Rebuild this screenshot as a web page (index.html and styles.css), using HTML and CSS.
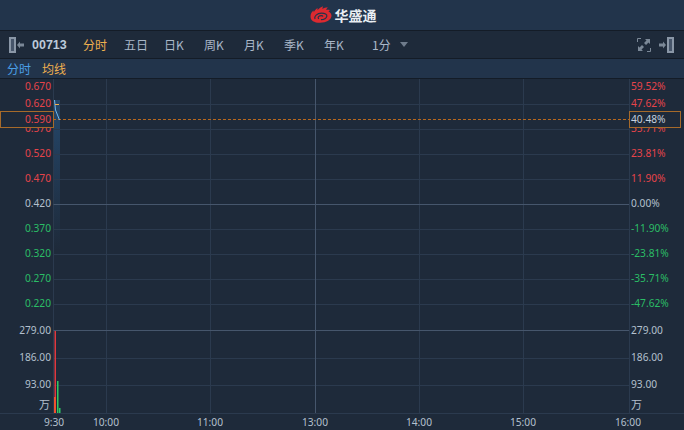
FILE: index.html
```html
<!DOCTYPE html>
<html lang="zh">
<head>
<meta charset="utf-8">
<title>华盛通 00713</title>
<link rel="stylesheet" href="styles.css">
</head>
<body>
<div class="app">
  <header class="brand">
    <svg class="logo" width="22" height="17" viewBox="0 0 22 17">
      <path class="flame" d="M0.500 10.500 C0.500 7.500 2 5.500 3.500 4.500 L3.800 6.200 C4.800 4.300 6.200 2.800 7.500 2 L7.500 4 C9 2.400 11 1 13 0.200 L12.300 3 C14 2 15.800 1.500 17.800 1.300 L16 3.800 C17.500 3.600 18.800 3.700 20 4 L18.500 5.500 C20.300 6.500 21.500 8 21.500 9.800 C21.500 13.500 16.500 16.800 10 16.800 C4 16.800 0.500 14.500 0.500 10.500 Z"/>
      <path class="swirl" d="M5 13 C3.800 10.300 7 7.200 11.500 7.200 C15 7.200 17.300 8.500 16.800 10.300 C16.300 12.200 13.800 13.500 11 13.700 M13 10.400 C12.500 9.400 10 9.400 8.800 10.400 C7.800 11.300 8 12.400 9 12.700"/>
    </svg>
    <span class="brand-name">华盛通</span>
  </header>
  <nav class="toolbar">
    <svg class="tool-icon" width="15" height="16" viewBox="0 0 15 16">
      <rect class="icon-box" x="1" y="1" width="5" height="14"/>
      <path class="icon-fill" d="M8 8 L11 4.500 V6.500 H15 V9.500 H11 V11.500 Z"/>
    </svg>
    <strong class="code">00713</strong>
    <span class="tab tab-first active">分时</span>
    <span class="tab">五日</span>
    <span class="tab">日K</span>
    <span class="tab">周K</span>
    <span class="tab">月K</span>
    <span class="tab">季K</span>
    <span class="tab">年K</span>
    <span class="period">1分</span>
    <span class="caret"></span>
    <span class="spacer"></span>
    <svg class="tool-icon" width="14" height="14" viewBox="0 0 14 14">
      <path class="icon-fill" d="M8 1 H13 V6 L11.500 4.500 L9 7 L7 5 L9.500 2.500 Z M6 13 H1 V8 L2.500 9.500 L5 7 L7 9 L4.500 11.500 Z"/>
      <path class="icon-line" d="M0.500 4 V0.500 H4 M13.500 10 V13.500 H10"/>
    </svg>
    <svg class="tool-icon icon-right" width="15" height="16" viewBox="0 0 15 16">
      <path class="icon-fill" d="M7 8 L4 4.500 V6.500 H0 V9.500 H4 V11.500 Z"/>
      <rect class="icon-box" x="9" y="1" width="5" height="14"/>
    </svg>
  </nav>
  <div class="legend">
    <span class="legend-price">分时</span>
    <span class="legend-avg">均线</span>
  </div>
  <svg class="chart" width="684" height="351" viewBox="0 79 684 351">
    <defs>
      <linearGradient id="area" x1="0" y1="0" x2="0" y2="1">
        <stop offset="0" stop-color="#2a5f92" stop-opacity=".55"/>
        <stop offset="1" stop-color="#2a5f92" stop-opacity="0"/>
      </linearGradient>
    </defs>
    <rect class="area" x="53" y="100" width="7" height="150"/>
    <g class="grid">
      <path d="M53.500 104.500 H629 M53.500 129.500 H629 M53.500 154.500 H629 M53.500 179.500 H629 M53.500 229.500 H629 M53.500 254.500 H629 M53.500 279.500 H629 M53.500 304.500 H629 M53.500 358.500 H629 M53.500 385.500 H629"/>
      <path d="M53.500 79 V413 M106.500 79 V413 M210.500 79 V413 M419.500 79 V413 M523.500 79 V413 M629.500 79 V413"/>
      <path d="M0 413.500 H684"/>
    </g>
    <g class="grid-major">
      <path d="M53.500 204.500 H629 M53.500 330.500 H629 M315.500 79 V413"/>
    </g>
    <path class="dash" d="M53 119.500 H629"/>
    <path class="line-price" d="M54.500 100 L55.500 110 L57.500 115 L59.500 120"/>
    <path class="line-avg" d="M55 104.500 H59"/>
    <g class="axis-left red">
      <text x="51" y="90">0.670</text>
      <text x="51" y="107">0.620</text>
      <text x="51" y="132">0.570</text>
      <text x="51" y="157">0.520</text>
      <text x="51" y="182">0.470</text>
    </g>
    <g class="axis-left flat"><text x="51" y="207">0.420</text></g>
    <g class="axis-left green">
      <text x="51" y="232">0.370</text>
      <text x="51" y="257">0.320</text>
      <text x="51" y="282">0.270</text>
      <text x="51" y="307">0.220</text>
    </g>
    <g class="axis-right red">
      <text x="631" y="90">59.52%</text>
      <text x="631" y="107">47.62%</text>
      <text x="631" y="132">35.71%</text>
      <text x="631" y="157">23.81%</text>
      <text x="631" y="182">11.90%</text>
    </g>
    <g class="axis-right flat"><text x="631" y="207">0.00%</text></g>
    <g class="axis-right green">
      <text x="631" y="232">-11.90%</text>
      <text x="631" y="257">-23.81%</text>
      <text x="631" y="282">-35.71%</text>
      <text x="631" y="307">-47.62%</text>
    </g>
    <g class="axis-left flat">
      <text x="51" y="334">279.00</text>
      <text x="51" y="361">186.00</text>
      <text x="51" y="388">93.00</text>
      <text class="unit" x="50" y="409">万</text>
    </g>
    <g class="axis-right flat">
      <text x="631" y="334">279.00</text>
      <text x="631" y="361">186.00</text>
      <text x="631" y="388">93.00</text>
      <text class="unit" x="631" y="409">万</text>
    </g>
    <g class="axis-time">
      <text x="54" y="426">9:30</text>
      <text x="106" y="426">10:00</text>
      <text x="210" y="426">11:00</text>
      <text x="315" y="426">13:00</text>
      <text x="419" y="426">14:00</text>
      <text x="523" y="426">15:00</text>
      <text x="628" y="426">16:00</text>
    </g>
    <rect class="bar-red" x="54.500" y="331" width="1.500" height="82"/>
    <rect class="bar-orange" x="54" y="397" width="2" height="16"/>
    <rect class="bar-green" x="57" y="381" width="1.500" height="32"/>
    <rect class="bar-green" x="59" y="408" width="1.500" height="5"/>
    <rect class="tag" x="0.500" y="111.500" width="53" height="16"/>
    <text class="tag-left" x="51" y="123">0.590</text>
    <rect class="tag" x="629.500" y="111.500" width="51" height="16"/>
    <text class="tag-right" x="631" y="123">40.48%</text>
  </svg>
</div>
</body>
</html>
```

FILE: styles.css
```css
* { box-sizing: border-box; }
html, body { margin: 0; padding: 0; }
body {
  width: 684px;
  height: 430px;
  overflow: hidden;
  background: #1e2a3a;
  font-family: "Noto Sans CJK SC", "Noto Sans", sans-serif;
}
.app { display: flex; flex-direction: column; width: 684px; height: 430px; }

.brand {
  display: flex;
  align-items: center;
  justify-content: center;
  gap: 3px;
  height: 31px;
  padding: 0 0 1px 2px;
  background: #22344b;
  border-bottom: 1px solid #141c27;
}
.flame { fill: #dc2a30; }
.swirl { fill: none; stroke: #22344b; stroke-width: 1.2; }
.brand-name { color: #e8edf2; font-size: 14px; font-weight: 700; line-height: 18px; }

.toolbar {
  display: flex;
  align-items: center;
  height: 28px;
  padding-left: 9px;
  background: #1e2a3a;
  border-bottom: 1px solid #141c27;
}
.tool-icon { flex: none; }
.icon-box { fill: #46556a; stroke: #8a97a7; stroke-width: 2; }
.icon-fill { fill: #7b8897; }
.icon-line { fill: none; stroke: #7b8897; }
.icon-right { margin: 0 10px 0 8px; }
.code {
  width: 51px;
  margin-left: 8px;
  color: #bccadb;
  font: 700 12.5px "Liberation Sans", sans-serif;
}
.tab { width: 40px; color: #aab8c9; font-size: 12px; line-height: 16px; }
.tab-first { width: 41px; }
.tab.active { color: #f0b04f; }
.period { width: 28px; margin-left: 8px; color: #aab8c9; font-size: 12px; line-height: 16px; }
.caret {
  width: 0;
  height: 0;
  border-left: 4px solid transparent;
  border-right: 4px solid transparent;
  border-top: 5px solid #6f7c8c;
}
.spacer { flex: 1; }

.legend {
  display: flex;
  align-items: center;
  gap: 11px;
  height: 20px;
  padding-left: 7px;
  background: #22344b;
  border-bottom: 1px solid #141c27;
  font-size: 12px;
  line-height: 16px;
}
.legend-price { color: #4a9fe6; }
.legend-avg { color: #f0b04f; }

.chart { display: block; flex: none; background: #1e2a3a; }
.chart text { font-family: "Noto Sans", sans-serif; font-size: 10.2px; }
.grid path { fill: none; stroke: #2b3a4e; stroke-width: 1; }
.grid-major path { fill: none; stroke: #46566c; stroke-width: 1; }
.dash { fill: none; stroke: #b8691f; stroke-width: 1; stroke-dasharray: 3 2; }
.area { fill: url(#area); }
.line-price { fill: none; stroke: #6fb7ee; stroke-width: 1; }
.line-avg { fill: none; stroke: #f0b04f; stroke-width: 1; }
.axis-left text { text-anchor: end; }
.axis-time text { text-anchor: middle; fill: #b4c0ce; }
.red text { fill: #e6444a; }
.green text { fill: #2bbd66; }
.flat text { fill: #b4c0ce; }
.chart .unit { font-family: "Noto Sans CJK SC", sans-serif; font-size: 11px; }
.bar-red { fill: #e0383e; }
.bar-orange { fill: #f0522e; }
.bar-green { fill: #2ec964; }
.tag { fill: #1e2a3a; stroke: #a66a2a; stroke-width: 1; }
.tag-left { fill: #e6444a; text-anchor: end; }
.tag-right { fill: #c4d0de; }
```
